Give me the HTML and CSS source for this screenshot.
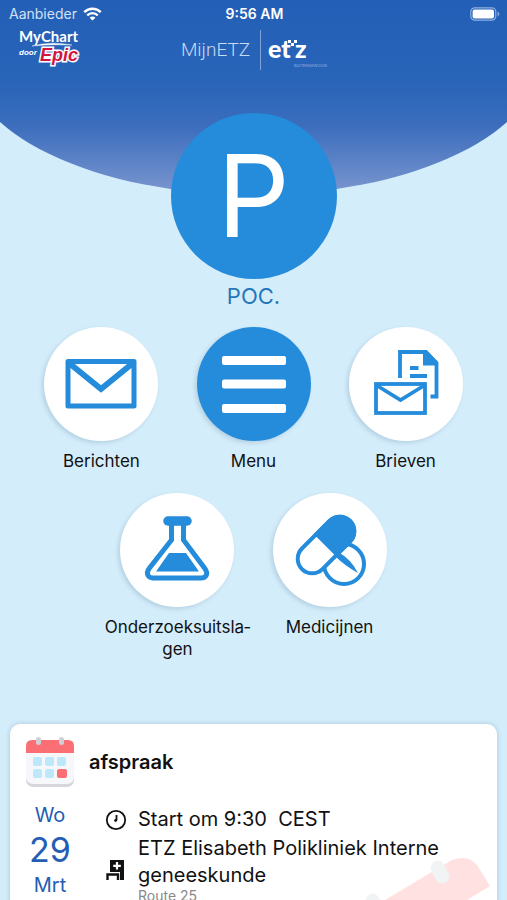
FILE: index.html
```html
<!DOCTYPE html>
<html lang="nl">
<head>
    <meta charset="UTF-8">
    <meta name="viewport" content="width=device-width, initial-scale=1.0">
    <title>MijnETZ</title>
    <link rel="stylesheet" href="styles.css">
</head>
<body>
    <div class="screen">
        <div class="statusbar">
            <div class="carrier">
                <span>Aanbieder</span>
                <svg width="19" height="14" viewBox="0 0 19 14" fill="none" stroke="#fff" stroke-width="2.4">
                    <path d="M1.2 5.2C5.8.6 13.2.6 17.8 5.2"/>
                    <path d="M4.2 8.3C7.2 5.4 11.8 5.4 14.8 8.3"/>
                    <path d="M9.5 13.6L6.6 10.7C8.2 9.2 10.8 9.2 12.4 10.7Z" fill="#fff" stroke="none"/>
                </svg>
            </div>
            <div class="time">9:56 AM</div>
            <svg class="battery" width="30" height="14" viewBox="0 0 30 14">
                <rect x=".8" y=".8" width="25" height="12.4" rx="4" fill="none" stroke="#8fb0e0" stroke-width="1.2"/>
                <rect x="2.6" y="2.6" width="21.4" height="8.8" rx="2" fill="#fff"/>
                <path d="M27.6 4.6C29.8 5.4 29.8 8.6 27.6 9.4Z" fill="#8fb0e0"/>
            </svg>
        </div>

        <header class="header">
            <svg class="mychart" width="66" height="38" viewBox="0 0 66 38">
                <text class="logo-my" x="1" y="13">MyChart</text>
                <path d="M14 17Q32 12 54 16Q34 15 14 17Z" fill="#fff" stroke="#fff" stroke-width=".4"/>
                <text class="logo-door" x="1" y="26">door</text>
                <text class="logo-epic" x="22" y="32">Epic</text>
            </svg>
            <div class="brand">
                <span class="brand-name">MijnETZ</span>
                <svg class="etz" width="58" height="40" viewBox="0 0 58 40">
                    <text class="logo-etz" x="0" y="28">et</text>
                    <text class="logo-etz" x="27" y="28">z</text>
                    <path d="M20 10h3v3h-3zM26 10h3v3h-3zM23 13h3v3h-3z" fill="#fff"/>
                    <text class="logo-sub" x="26" y="37">BUITENGEWOON</text>
                </svg>
            </div>
        </header>

        <div class="profile">
            <button class="avatar" aria-labelledby="name">P</button>
            <div class="name" id="name">POC.</div>
        </div>

        <ul class="actions">
            <li>
                <button>
                    <span class="circle">
                        <svg width="114" height="114" viewBox="0 0 114 114" fill="none" stroke="#258bdb" stroke-width="5">
                            <rect x="24" y="34.5" width="66" height="44.5" stroke-linejoin="round"/>
                            <path d="M25 36L57 62L89 36" stroke-width="6"/>
                        </svg>
                    </span>
                    <span class="label">Berichten</span>
                </button>
            </li>
            <li>
                <button>
                    <span class="circle blue">
                        <svg width="114" height="114" viewBox="0 0 114 114" fill="#fff">
                            <rect x="25" y="29" width="64" height="9" rx="2"/>
                            <rect x="25" y="52.5" width="64" height="9" rx="2"/>
                            <rect x="25" y="77" width="64" height="9" rx="2"/>
                        </svg>
                    </span>
                    <span class="label">Menu</span>
                </button>
            </li>
            <li>
                <button>
                    <span class="circle">
                        <svg width="114" height="114" viewBox="0 0 114 114" fill="none" stroke="#258bdb" stroke-width="3.8">
                            <path d="M51 51V25H77L87.5 36V69.5H81.5"/>
                            <path d="M74 23.5H77.5L89 35V38.5H74Z" fill="#258bdb" stroke="none"/>
                            <path d="M61 41H69.5M61 49H78"/>
                            <rect x="27" y="57" width="49" height="29"/>
                            <path d="M27 58L51.5 73L76 58"/>
                        </svg>
                    </span>
                    <span class="label">Brieven</span>
                </button>
            </li>
            <li>
                <button>
                    <span class="circle">
                        <svg width="114" height="114" viewBox="0 0 114 114" fill="none" stroke="#258bdb" stroke-width="5">
                            <path d="M51.5 30V47L29.5 75C25 81 28.5 85 33 85H81C86 85 89 81 84.5 75L63.5 47V30"/>
                            <path d="M48 28H67" stroke-width="9.5" stroke-linecap="round"/>
                            <path d="M49 60H66L79 78.5H36Z" fill="#258bdb" stroke="none"/>
                        </svg>
                    </span>
                    <span class="label">Onderzoeksuitsla&shy;gen</span>
                </button>
            </li>
            <li>
                <button>
                    <span class="circle">
                        <svg width="114" height="114" viewBox="0 0 114 114" fill="none" stroke="#258bdb" stroke-width="4">
                            <circle cx="71" cy="71" r="20"/>
                            <g transform="translate(53 52) rotate(-45)">
                                <rect x="-34" y="-14.5" width="68" height="29" rx="14.5" fill="#fff"/>
                                <path d="M1 -14.5H19.5A14.5 14.5 0 0 1 19.5 14.5H1Z" fill="#258bdb"/>
                            </g>
                            <path d="M65 59Q78 66 85 80Q72 73 62 63Z" fill="#258bdb" stroke="none"/>
                        </svg>
                    </span>
                    <span class="label">Medicijnen</span>
                </button>
            </li>
        </ul>

        <section class="card">
            <div class="card-head">
                <svg width="48" height="50" viewBox="0 0 48 50">
                    <rect x="0" y="5" width="48" height="45" rx="7" fill="#d5d7dc"/>
                    <rect x="0" y="5" width="48" height="42" rx="7" fill="#f6f7fb"/>
                    <path d="M0 16V9Q0 3 6 3H42Q48 3 48 9V16Z" fill="#fb6f74"/>
                    <rect x="10" y="0" width="5" height="8" rx="2.5" fill="#ced0d4"/>
                    <rect x="33" y="0" width="5" height="8" rx="2.5" fill="#ced0d4"/>
                    <g fill="#bde7fb">
                        <rect x="7" y="20" width="9" height="9" rx="2"/>
                        <rect x="19" y="20" width="9" height="9" rx="2"/>
                        <rect x="31" y="20" width="9" height="9" rx="2"/>
                        <rect x="7" y="32" width="9" height="9" rx="2"/>
                        <rect x="19" y="32" width="9" height="9" rx="2"/>
                    </g>
                    <rect x="31" y="32" width="10" height="9" rx="2" fill="#fb6f74"/>
                </svg>
                <h2>afspraak</h2>
            </div>
            <div class="card-body">
                <div class="date">
                    <span>Wo</span>
                    <span class="day">29</span>
                    <span>Mrt</span>
                </div>
                <div class="details">
                    <div class="row">
                        <svg width="22" height="22" viewBox="0 0 22 22" fill="none" stroke="#111" stroke-width="1.8">
                            <circle cx="11" cy="11" r="9.2"/>
                            <path d="M11.5 6V11.5"/>
                            <circle cx="10.6" cy="11.5" r="1.4" fill="#111" stroke="none"/>
                        </svg>
                        <span>Start om 9:30&nbsp; CEST</span>
                    </div>
                    <div class="row place">
                        <svg width="22" height="22" viewBox="0 0 22 22">
                            <path d="M5 1H19V21H15V13H5Z" fill="#111"/>
                            <path d="M12 3V10.6M8.2 6.8H15.8" stroke="#fff" stroke-width="2.2"/>
                            <path d="M2.5 21V15.5H13V21" fill="none" stroke="#111" stroke-width="2.4"/>
                        </svg>
                        <span>ETZ Elisabeth Polikliniek Interne geneeskunde</span>
                    </div>
                    <div class="route">Route 25</div>
                </div>
            </div>
            <svg class="watermark" width="140" height="90" viewBox="0 0 140 90">
                <path d="M0 64L102 3Q118 -3 127 8L140 29L40 90H0Z" fill="#ffe1e2"/>
                <rect x="-7" y="-12" width="14" height="24" rx="7" transform="translate(90 15) rotate(-28)" fill="#f1f4f4"/>
                <rect x="-7" y="-12" width="14" height="24" rx="7" transform="translate(25 48) rotate(-28)" fill="#f1f4f4"/>
            </svg>
        </section>
    </div>
</body>
</html>
```

FILE: styles.css
```css
body,ul,h2{
    margin: 0;
}
ul{
    padding-left: 0;
    list-style: none;
}
svg{
    display: block;
    flex: none;
}
body{
    font-family: Inter, "Liberation Sans", sans-serif;
    color: #111;
    background-color: #d4edfb;
}
button{
    padding: 0;
    border: 0;
    background: none;
    color: inherit;
    font-family: inherit;
    cursor: pointer;
}
.screen{
    position: relative;
    display: flex;
    flex-direction: column;
    height: 100vh;
    overflow: hidden;
}
/* curved blue backdrop */
.screen::before{
    content: "";
    position: absolute;
    z-index: -1;
    top: 0;
    left: -7%;
    width: 114%;
    height: 195px;
    border-radius: 0 0 50% 50% / 0 0 140px 140px;
    background: linear-gradient(#235fb6 0, #2864b8 80px, #3b6dbc 125px, #7c97cf 195px);
}

.statusbar{
    flex: none;
    display: grid;
    grid-template-columns: 1fr auto 1fr;
    align-items: center;
    height: 27px;
    padding: 0 7px 0 9px;
    color: #fff;
    font-size: 14px;
}
.carrier{
    display: flex;
    align-items: center;
    gap: 6px;
    color: #d3e0f5;
}
.time{
    font-weight: 600;
}
.battery{
    justify-self: end;
}

.header{
    flex: none;
    display: grid;
    grid-template-columns: 1fr auto 1fr;
    height: 84px;
    padding: 2px 18px 0;
}
.header svg{
    overflow: visible;
}
.brand{
    display: flex;
    align-items: center;
    height: 42px;
}
.brand-name{
    padding-right: 10px;
    border-right: 1px solid #7fa2d8;
    color: #c9daf3;
    font: 300 19px/40px Roboto, sans-serif;
}
.etz{
    margin-left: 7px;
}
.header text{
    fill: #fff;
    font-family: Lato, sans-serif;
}
.header .logo-my{
    font-size: 15px;
    font-weight: 700;
}
.header .logo-door{
    font-family: "Liberation Sans", sans-serif;
    font-size: 8px;
    font-weight: 700;
    font-style: italic;
}
.header .logo-epic{
    fill: #d5143f;
    stroke: #fff;
    stroke-width: 3px;
    paint-order: stroke;
    font-family: "Liberation Sans", sans-serif;
    font-size: 18px;
    font-weight: 700;
    font-style: italic;
}
.header .logo-etz{
    font-size: 25px;
    font-weight: 900;
}
.header .logo-sub{
    fill: #8fb0e0;
    font-size: 4px;
}

.profile{
    flex: none;
    display: flex;
    flex-direction: column;
    align-items: center;
}
.avatar{
    width: 166px;
    height: 166px;
    border-radius: 50%;
    background-color: #258bdb;
    color: #fff;
    font-size: 114px;
    line-height: 166px;
}
.name{
    color: #2577b8;
    font-size: 22px;
    line-height: 34px;
}

.actions{
    flex: none;
    display: flex;
    flex-wrap: wrap;
    justify-content: center;
    row-gap: 21px;
    padding: 14px 0 64px;
}
.actions li{
    flex: 0 0 30%;
}
.actions button{
    display: flex;
    flex-direction: column;
    align-items: center;
    gap: 9px;
    width: 100%;
}
.circle{
    width: 114px;
    height: 114px;
    border-radius: 50%;
    background-color: #fff;
    box-shadow: -2px 2px 4px rgba(60, 100, 130, 0.2);
}
.circle.blue{
    background-color: #258bdb;
}
.label{
    max-width: 100%;
    font-size: 17px;
    line-height: 22px;
}

.card{
    position: relative;
    flex: 1 0 auto;
    margin: 0 10px;
    padding: 13px 16px;
    border-radius: 10px;
    background-color: #fff;
    box-shadow: 0 0 5px rgba(60, 100, 130, 0.3);
}
.card-head{
    display: flex;
    align-items: center;
    gap: 15px;
}
.card-head h2{
    font-size: 20px;
    font-weight: 600;
}
.card-body{
    position: relative;
    z-index: 1;
    display: flex;
    gap: 31px;
    padding-top: 12px;
}
.date{
    display: flex;
    flex-direction: column;
    align-items: center;
    width: 48px;
    color: #245db3;
    font-size: 20px;
    line-height: 32px;
}
.date .day{
    font-size: 34px;
    line-height: 38px;
}
.details{
    flex: 1;
    padding-top: 7px;
    font-size: 20px;
    line-height: 27px;
}
.row{
    display: flex;
    align-items: center;
    gap: 11px;
}
.row.place{
    align-items: flex-end;
    padding-top: 2px;
}
.place svg{
    padding-bottom: 8px;
}
.route{
    padding-left: 33px;
    color: #888;
    font-size: 14px;
    line-height: 14px;
}
.watermark{
    position: absolute;
    top: 133px;
    right: 7px;
}
```
